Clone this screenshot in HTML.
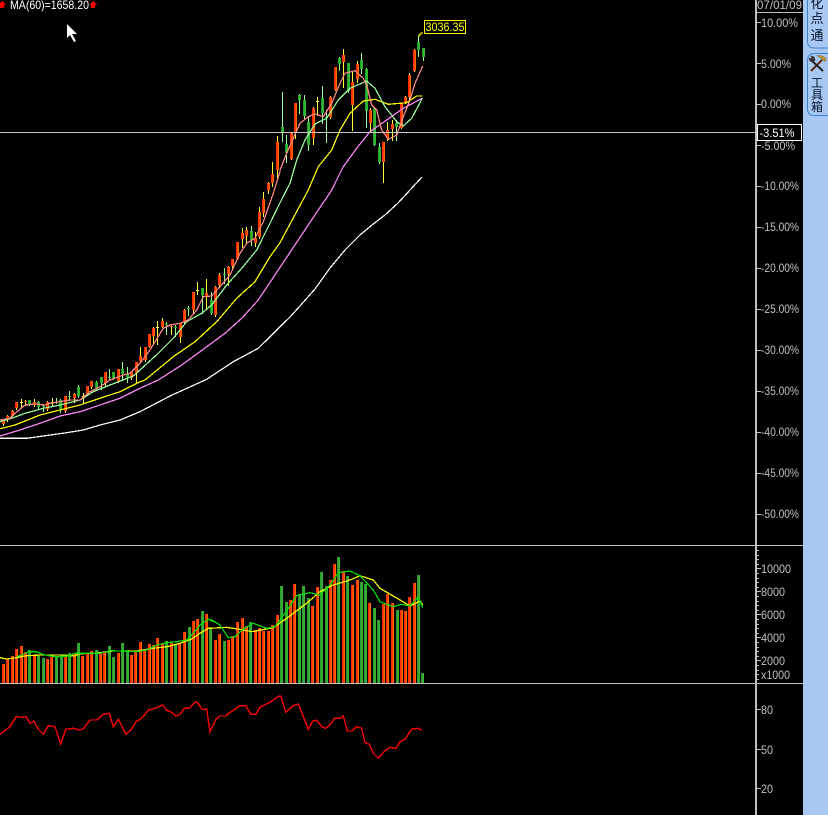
<!DOCTYPE html>
<html><head><meta charset="utf-8"><style>
html,body{margin:0;padding:0;background:#000;width:828px;height:815px;overflow:hidden}
svg{position:absolute;left:0;top:0;display:block}
text{font-family:"Liberation Sans","Noto Sans CJK SC",sans-serif;font-size:12px;fill:#c0c0c0}
.t{font-size:13px;fill:#06142a;text-anchor:middle}
</style></head><body>
<svg id="s" width="828" height="815" viewBox="0 0 828 815">
<rect width="828" height="815" fill="#000"/>
<g id="g" shape-rendering="crispEdges"></g>
<g shape-rendering="crispEdges">
<rect x="0" y="132" width="755" height="1" fill="#c8c8c8"/>
<rect x="0" y="545" width="803" height="1" fill="#c0c0c0"/>
<rect x="0" y="683" width="803" height="1" fill="#c0c0c0"/>
<rect x="755" y="0" width="2" height="815" fill="#c0c0c0"/>
<rect x="755" y="12" width="48" height="1" fill="#c0c0c0"/>
<rect x="803" y="0" width="25" height="815" fill="#a8c8f4"/>
<rect x="757.5" y="124.5" width="44" height="16" fill="#000" stroke="#fff"/>
<rect x="424.5" y="20.5" width="41" height="13" fill="#000" stroke="#ff0"/>
<path d="M423 33h-2v1h-1v1h-1v2" fill="none" stroke="#ff0"/>
<path d="M2 1L6 5H4V8H0V5H-2Z" fill="#f00"/>
<path d="M93 1L97 5H95V8H91V5H89Z" fill="#f00"/>
</g>
<text x="10" y="9" style="fill:#fff" textLength="79" lengthAdjust="spacingAndGlyphs">MA(60)=1658.20</text>
<polygon points="67,24 77,34 72,34 76,41 74,42 70,35 67,38" fill="#fff"/>
<text x="425.500" y="31" style="fill:#ff0" textLength="39" lengthAdjust="spacingAndGlyphs">3036.35</text>
<text x="757" y="9" textLength="45" lengthAdjust="spacingAndGlyphs">07/01/09</text>
<text x="759.500" y="137" style="fill:#fff" textLength="35" lengthAdjust="spacingAndGlyphs">-3.51%</text>
<text x="761" y="27" textLength="37" lengthAdjust="spacingAndGlyphs">10.00%</text>
<text x="761" y="68" textLength="30" lengthAdjust="spacingAndGlyphs">5.00%</text>
<text x="761" y="108" textLength="30" lengthAdjust="spacingAndGlyphs">0.00%</text>
<text x="761" y="150" textLength="34" lengthAdjust="spacingAndGlyphs">-5.00%</text>
<text x="761" y="190" textLength="38" lengthAdjust="spacingAndGlyphs">-10.00%</text>
<text x="761" y="231" textLength="38" lengthAdjust="spacingAndGlyphs">-15.00%</text>
<text x="761" y="272" textLength="38" lengthAdjust="spacingAndGlyphs">-20.00%</text>
<text x="761" y="313" textLength="38" lengthAdjust="spacingAndGlyphs">-25.00%</text>
<text x="761" y="354" textLength="38" lengthAdjust="spacingAndGlyphs">-30.00%</text>
<text x="761" y="395" textLength="38" lengthAdjust="spacingAndGlyphs">-35.00%</text>
<text x="761" y="436" textLength="38" lengthAdjust="spacingAndGlyphs">-40.00%</text>
<text x="761" y="477" textLength="38" lengthAdjust="spacingAndGlyphs">-45.00%</text>
<text x="761" y="518" textLength="38" lengthAdjust="spacingAndGlyphs">-50.00%</text>
<text x="761" y="573" textLength="30" lengthAdjust="spacingAndGlyphs">10000</text>
<text x="761" y="596" textLength="24" lengthAdjust="spacingAndGlyphs">8000</text>
<text x="761" y="619" textLength="24" lengthAdjust="spacingAndGlyphs">6000</text>
<text x="761" y="642" textLength="24" lengthAdjust="spacingAndGlyphs">4000</text>
<text x="761" y="665" textLength="24" lengthAdjust="spacingAndGlyphs">2000</text>
<text x="761" y="679" textLength="29" lengthAdjust="spacingAndGlyphs">x1000</text>
<text x="761" y="714" textLength="12" lengthAdjust="spacingAndGlyphs">80</text>
<text x="761" y="754" textLength="12" lengthAdjust="spacingAndGlyphs">50</text>
<text x="761" y="793" textLength="12" lengthAdjust="spacingAndGlyphs">20</text>
<path d="M807.500 0V41q0 7 7 7H828M828 53.500H814.500q-7 0-7 7V108.500q0 7 7 7H828" fill="none" stroke="#3f7fd0" stroke-width="1"/>
<text class="t" x="817" y="8">化</text>
<text class="t" x="817" y="23">点</text>
<text class="t" x="817" y="40">通</text>
<g fill="none" stroke-linecap="butt">
<path d="M811 71L822 60" stroke="#5a2c10" stroke-width="2"/>
<path d="M821 58l4 3.500 1-3-4-2.500-5-.5z" fill="#c8a030" stroke="#7a5a10" stroke-width=".6"/>
<path d="M823 71L812 61" stroke="#222" stroke-width="2"/>
<path d="M813 62l-3-1-1-3 2 1 1-1-1-2 3 1 1 3z" fill="#333" stroke="#222" stroke-width=".6"/>
</g>
<text class="t" x="817" y="87" style="font-size:12px">工</text>
<text class="t" x="817" y="99" style="font-size:12px">具</text>
<text class="t" x="817" y="111" style="font-size:12px">箱</text>
</svg>
<script>
(function(){
var h='';
function R(x,y,w,ht,c){if(ht<=0)return;h+='<rect x="'+x+'" y="'+y+'" width="'+w+'" height="'+ht+'" fill="'+c+'"/>';}
function L(p,ox,oy){var a=[];for(var i=0;i<p.length;i+=2)a.push((ox+p[i]/3).toFixed(1)+','+(oy+p[i+1]/3).toFixed(1));return a.join(' ');}
function PL(s,c,w){h+='<polyline points="'+s+'" fill="none" stroke="'+c+'" stroke-width="'+(w||1.25)+'"/>';}

/* volume */
var v6=[10,'o',222,22,'o',207,37,'o',198,49,'o',177,64,'o',168,76,'o',186,88,'g',180,103,'o',198,115,'g',195,130,'g',204,142,'o',207,154,'o',200,169,'g',198,182,'g',195,196,'o',198,208,'g',190,223,'o',190,235,'g',159,247,'o',198,262,'o',192,274,'o',183,289,'g',180,301,'o',186,313,'o',183,328,'g',168,340,'g',201,353,'o',189,367,'g',159,380,'g',180,394,'o',195,406,'o',186,421,'o',156,433,'o',180,448,'o',162,460,'o',166,472,'o',144,487,'o',160,499,'g',153,514,'o',159,526,'g',165,538,'o',159,553,'o',126,566,'g',111,580,'o',93,592,'o',87,607,'g',63,619,'o',72];
var v7=[0,'g',252,15,'o',285,28,'o',267,42,'g',288,55,'o',285,67,'o',273,82,'o',231,95,'o',219,108,'o',243,120,'g',231,135,'o',255,148,'o',249,160,'o',258,175,'o',258,187,'o',240,202,'o',210,214,'g',123,227,'g',171,240,'o',165,253,'o',117,267,'g',147,280,'g',123,295,'g',159,307,'o',183,320,'o',126,334,'g',81,347,'g',123,360,'o',105,373,'o',57,385,'g',36,398,'o',78,411,'g',93,426,'o',120,440,'o',105,453,'g',111,466,'g',117,478,'o',174,492,'g',189,505,'g',225,520,'o',177,532,'o',147,545,'o',174,560,'g',195,572,'o',195,586,'o',198,598,'o',156,611,'o',114,625,'g',90,637,'g',384];
function bar(x,top,bot,t){x=Math.round(x);top=Math.round(top);bot=Math.round(bot);
 var c=t=='o'?['#ff2a00','#ff4000','#ff6a00']:['#2f9a2f','#33aa33','#38b038'];
 for(var i=0;i<3;i++)R(x-1+i,top,1,bot-top,c[i]);}
for(var i=0;i<v6.length;i+=3)bar(v6[i]/3,590+v6[i+2]/3,683,v6[i+1]);
for(i=0;i<v7.length;i+=3)bar(210+v7[i]/3,545+v7[i+2]/3,683,v7[i+1]);
PL(L([0,203,20,207,50,203,80,197,120,195,190,195,225,198,235,192,300,188,340,183,410,183,460,175,500,170,540,160,575,147,600,130,625,115],0,590)+' '+L([0,250,50,247,100,255,125,260,190,248,230,220,290,175,330,140,370,120,420,105,450,92,490,105,510,130,570,165,600,183,630,168,638,180],210,545),'#ffff00');
PL(L([50,200,65,195,85,185,110,185,125,192,150,198,175,200,205,198,225,190,300,190,330,182,410,185,440,180,470,165,500,158,530,155,560,150,580,130,600,105,625,88,640,95],0,590)+' '+L([0,222,30,240,55,278,75,275,100,252,130,235,170,250,195,245,225,205,260,152,300,143,330,150,360,120,385,83,420,78,450,92,490,135,510,170,550,185,575,178,600,183,625,155,638,188],210,545),'#00e000');

/* RSI */
PL(L([0,148,30,125,48,95,70,97,78,95,90,115,102,108,115,133,130,148,145,122,165,125,182,177,197,133,220,130,238,135,250,132,270,105,290,105,310,88,328,85,340,125,355,103,378,148,395,132,408,110,425,100,445,75,465,70,488,60,500,75,515,82,528,93,540,88,553,70,568,70,585,52,592,52,605,72,620,73],0,685)+' '+L([0,140,18,103,30,93,45,93,90,62,108,62,122,88,138,88,150,67,180,52,205,34,213,34,227,82,250,62,265,57,295,133,308,108,320,106,335,125,347,130,362,118,373,100,390,100,400,93,412,138,425,138,440,125,455,130,465,173,478,178,490,205,505,220,525,197,540,187,558,190,570,170,585,163,605,132,625,130,635,136],210,685),'#ff0000',1.4);

/* moving averages */
var mas=[];
mas.push([L([0,265,80,265,130,258,200,248,250,240,300,225,360,210,420,185],0,350)+' 170,396 '+L([230,688,310,635,385,595,450,530],130,150)+' 290,317 300,306 315,289 330,268 345,250 360,235 372,225 385,215 398,203 410,190 422,177','#ffffff']);
mas.push([L([0,258,60,240,120,220,180,198,240,185,300,165,360,145,420,115],0,350)+' '+L([85,690,155,645,210,605,285,550,335,505,385,450,450,352],130,150)+' '+L([215,510,250,440,290,385,330,335,380,300,430,265,487,235],260,20),'#ff88ff']);
mas.push([L([0,236,45,225,120,195,180,180,240,165,300,145,360,125,420,95],0,350)+' '+L([45,690,130,620,195,575,260,515,320,445,375,395,420,320,450,278],130,150)+' '+L([145,510,175,440,215,390,240,330,270,280,310,243,345,238,385,253,440,248,470,228,487,228],260,20),'#ffff00']);

/* candles */
function C(x,t,wt,bt,bb,wb,ox,oy){
 x=Math.round(ox+x/3);wt=Math.round(oy+wt/3);bt=Math.round(oy+bt/3);bb=Math.round(oy+bb/3);wb=Math.round(oy+wb/3);
 if(t=='y'){R(x,wt,1,wb-wt+1,'#ffff44');R(x-1,bt,3,1,'#ffff44');return;}
 var w=t=='o'?'#ffff33':'#99ff99';
 R(x,wt,1,wb-wt+1,w);
 if(bb<=bt)bb=bt+1;
 var c=t=='o'?['#ff2a00','#ff4000','#ff6a00']:['#2f9a2f','#22c022','#38b038'];
 for(var i=0;i<3;i++)R(x-1+i,bt,1,bb-bt,c[i]);
}
var c5=[10,'o',210,212,222,225,22,'o',195,198,205,212,37,'o',180,182,198,198,49,'o',155,155,175,178,63,'y',148,155,158,170,75,'o',150,153,155,165,88,'g',150,150,163,165,102,'o',148,155,165,168,115,'g',153,155,172,178,129,'g',165,168,170,183,142,'o',153,155,178,180,155,'y',145,155,158,165,168,'g',143,155,158,160,180,'g',147,150,178,185,195,'o',138,138,183,185,208,'g',122,138,140,150,222,'o',130,132,145,155,235,'g',105,110,138,140,248,'y',130,138,140,155,262,'o',107,108,135,135,273,'o',93,93,112,115,288,'g',92,95,115,118,302,'g',80,82,100,118,315,'o',67,67,100,105,327,'g',58,82,84,90,340,'g',67,67,87,87,353,'o',58,58,95,95,367,'g',37,58,72,90,380,'g',50,72,82,97,394,'o',65,67,85,87,407,'o',35,37,70,95];
var c4=[31,'o',590,618,632,635,44,'o',590,592,630,632,58,'o',552,553,590,592,70,'o',530,535,558,580,82,'y',513,532,534,582,97,'o',505,513,532,532,109,'g',517,522,525,552,124,'o',525,527,532,552,136,'g',525,530,532,558,149,'o',518,520,562,575,163,'o',478,480,517,520,175,'g',468,475,478,495,190,'o',425,425,480,485,202,'y',397,420,430,432,217,'g',415,415,435,488,229,'o',388,430,440,478,242,'g',425,450,490,492,256,'o',408,412,495,497,268,'o',368,375,405,408,283,'g',355,372,375,400,295,'o',348,350,372,405,307,'o',327,328,348,358,322,'o',275,276,327,327,335,'o',235,250,268,292,349,'o',232,240,258,280,362,'g',228,242,270,285,376,'o',245,265,278,288,388,'o',170,187,262,265,400,'o',125,148,190,198];
var c3=[25,'o',485,488,510,520,37,'o',425,462,490,497,52,'o',348,365,450,475,65,'g',215,320,337,362,77,'g',345,372,400,425,92,'o',338,338,417,417,104,'o',248,250,335,355,118,'g',222,225,240,280,132,'g',225,240,288,295,145,'g',290,305,375,390,158,'o',262,263,355,372,170,'y',232,243,245,285,185,'g',198,235,280,310,197,'g',270,290,292,367,211,'o',228,230,292,295,224,'o',140,142,210,210,236,'g',110,113,132,150,250,'o',88,105,125,200,263,'g',128,128,212,215,277,'o',155,185,255,330,290,'o',122,132,178,185,304,'g',100,120,148,160,317,'g',145,148,272,320,329,'o',265,270,308,335,343,'g',262,265,375,375,356,'g',368,382,425,430,370,'o',365,367,425,485,382,'o',305,330,355,360,395,'o',300,312,328,360,409,'g',300,308,322,360,422,'o',248,250,325,325,436,'o',228,232,245,250,448,'o',158,165,230,240,461,'o',88,90,152,152,475,'g',48,66,90,108,488,'g',85,85,112,120];
function run(a,ox,oy){for(var i=0;i<a.length;i+=6)C(a[i],a[i+1],a[i+2],a[i+3],a[i+4],a[i+5],ox,oy);}
run(c5,0,350);run(c4,130,150);run(c3,260,20);

for(i=0;i<mas.length;i++)PL(mas[i][0],mas[i][1]);
PL(L([0,215,40,203,75,190,130,175,180,165,240,150,280,125,330,105,400,78],0,350)+' '+L([85,610,130,565,170,515,215,490,245,465,290,405,335,355,380,300,420,220,450,158],130,150)+' '+L([90,490,110,420,135,360,165,312,200,295,235,240,270,205,320,183,345,205,375,260,410,305,430,318,455,295,487,235],260,20),'#99ff99');
PL(L([0,210,30,205,45,190,75,165,105,162,135,165,150,160,210,150,240,150,270,125,300,110,330,90,370,75],0,350)+' '+L([0,670,30,640,60,600,100,535,120,525,150,520,175,510,200,480,220,440,245,438,270,410,300,375,330,310,350,280,375,265,400,215,430,130,450,65],130,150)+' '+L([60,450,80,400,100,355,120,310,145,290,165,282,190,290,215,250,240,190,255,160,285,152,310,175,320,195,335,255,350,270,365,330,385,358,410,345,430,290,450,240,465,190,488,138],260,20),'#ff8888');

/* axis ticks */
var c='#c0c0c0';
for(i=0;i<13;i++){R(757,Math.round(22+i*41),4,1,c);}
for(i=0;i<29;i++){var y=Math.round(550+i*4.6);var big=(i-4)%5==0&&i<26;R(757,y,big?4:2,1,c);}
R(757,709,4,1,c);R(757,749,4,1,c);R(757,788,4,1,c);
document.getElementById('g').innerHTML=h;
})();
</script>
</body></html>
